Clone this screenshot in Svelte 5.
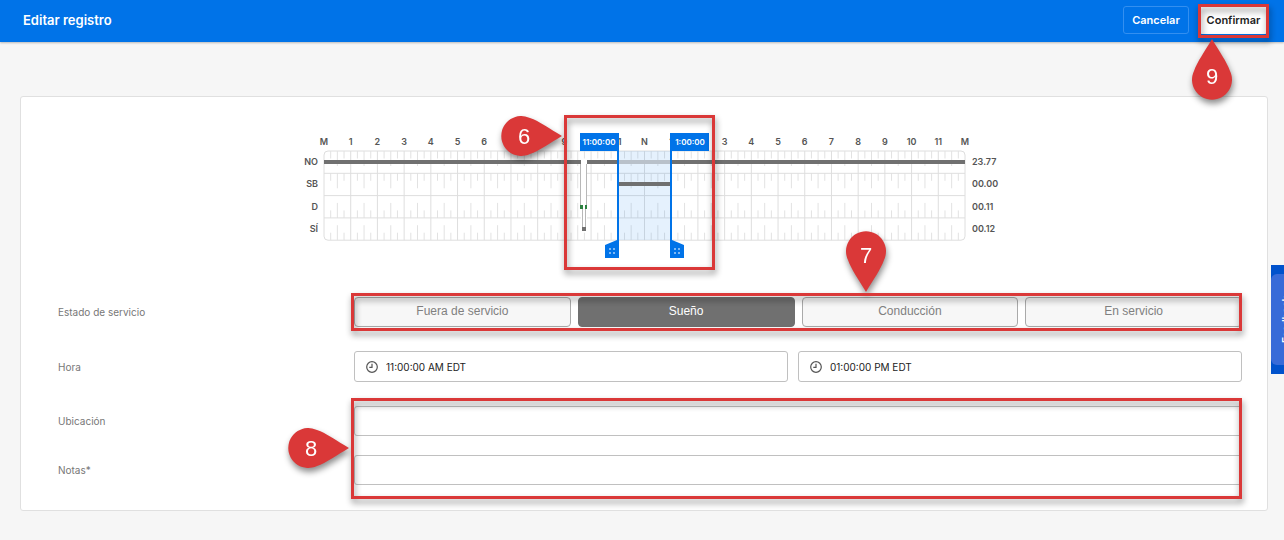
<script>
  let status = 'Sueño';
  let startTime = '11:00:00 AM EDT';
  let endTime = '01:00:00 PM EDT';
  let location = '';
  let notes = '';

  const statuses = ['Fuera de servicio', 'Sueño', 'Conducción', 'En servicio'];

  // grid geometry, in svg units
  const left = 40;
  const right = 681;
  const top = 41;
  const rowHeight = 22.3;
  const hourWidth = (right - left) / 24;

  const hours = Array.from({ length: 25 }, (_, i) => {
    if (i % 24 === 0) return 'M';
    return i === 12 ? 'N' : String(i % 12);
  });

  const rows = [
    { code: 'NO', total: '23.77', ticksUp: false },
    { code: 'SB', total: '00.00', ticksUp: false },
    { code: 'D', total: '00.11', ticksUp: true },
    { code: 'SÍ', total: '00.12', ticksUp: true }
  ];

  // quarter hour marks of one row, the half hour ones are longer
  function ticks(row, index) {
    let d = '';
    for (let q = 1; q < 96; q++) {
      if (q % 4 === 0) continue;
      const x = left + (q * hourWidth) / 4;
      const size = q % 2 === 0 ? 15 : 7.5;
      const y = row.ticksUp ? top + (index + 1) * rowHeight : top + index * rowHeight;
      d += `M${x} ${y}v${row.ticksUp ? -size : size}`;
    }
    return d;
  }
</script>

{#snippet pin(number, side)}
  {#if side === 'right'}
    <svg class="pin pin-right" width="62" height="40" viewBox="0 0 62 40">
      <path d="M62 20C50 13 39 5 30 2A20 20 0 1 0 30 38C39 35 50 27 62 20Z" />
      <text x="24" y="28">{number}</text>
    </svg>
  {:else if side === 'down'}
    <svg class="pin pin-down" width="40" height="62" viewBox="0 0 40 62">
      <path d="M20 62C13 50 5 39 2 30A20 20 0 1 1 38 30C35 39 27 50 20 62Z" />
      <text x="20" y="33">{number}</text>
    </svg>
  {:else}
    <svg class="pin pin-up" width="40" height="62" viewBox="0 0 40 62">
      <path d="M20 0C27 12 35 23 38 32A20 20 0 1 1 2 32C5 23 13 12 20 0Z" />
      <text x="20" y="45">{number}</text>
    </svg>
  {/if}
{/snippet}

{#snippet clock()}
  <svg class="clock" width="12" height="12" viewBox="0 0 12 12" aria-hidden="true">
    <circle cx="6" cy="6" r="5.3" />
    <path d="M6 2.8V6.3H3.3" />
  </svg>
{/snippet}

<header class="topbar">
  <h1>Editar registro</h1>
  <div class="actions">
    <button type="button" class="cancel">Cancelar</button>
    <div class="marked">
      <button type="submit" form="log-form" class="confirm">Confirmar</button>
      <div class="frame frame-confirm">{@render pin(9, 'up')}</div>
    </div>
  </div>
</header>

<main class="card">
  <div class="chart">
    <svg width="720" height="160" viewBox="0 0 720 160">
      <rect class="grid" x={left} y={top} width={right - left} height={rowHeight * 4} rx="4" />
      {#each rows as row, i}
        <path class="tick" d={ticks(row, i)} />
        {#if i > 0}
          <path class="grid" d="M{left} {top + i * rowHeight}H{right}" />
        {/if}
        <text class="label" x="34" y={top + i * rowHeight + 14} text-anchor="end">{row.code}</text>
        <text class="label" x="688" y={top + i * rowHeight + 14}>{row.total}</text>
      {/each}
      {#each hours as hour, i}
        {#if i > 0 && i < 24}
          <path class="grid" d="M{left + i * hourWidth} {top}v{rowHeight * 4}" />
        {/if}
        <text class="label" x={left + i * hourWidth} y="35" text-anchor="middle">{hour}</text>
      {/each}

      <!-- recorded duty line -->
      <rect x="297" y="49" width="6" height="70" fill="#fff" />
      <path class="duty" d="M40 52H297M303 52H681" />
      <path class="drop" d="M296.5 54V96M302.5 54V96M298.5 96V120M301.5 96V120" />
      <path class="driving" d="M296 97H299M301 97H303" />
      <path class="duty" d="M298 119H302" />

      <!-- selected range -->
      <rect x="335" y="41" width="51" height="89" fill="#0073e8" fill-opacity="0.1" />
      <rect x="335" y="50" width="51" height="4" fill="#b9c1ca" />
      <path class="duty" d="M335 74H387" />
      <g class="handle">
        <path d="M296 23H335V148H321V135L333 130V41H296Z" />
        <path d="M425 23H386V148H400V135L388 130V41H425Z" />
      </g>
      <path class="dots" d="M325 139h2M329 139h2M325 143h2M329 143h2M390 139h2M394 139h2M390 143h2M394 143h2" />
      <text class="flag" x="315" y="35">11:00:00</text>
      <text class="flag" x="406" y="35">1:00:00</text>
    </svg>
    <div class="frame frame-range">{@render pin(6, 'right')}</div>
  </div>

  <form id="log-form" on:submit|preventDefault>
    <div class="row">
      <span class="name" id="status-name">Estado de servicio</span>
      <div class="statuses marked" role="group" aria-labelledby="status-name">
        {#each statuses as item}
          <button
            type="button"
            class="status"
            class:active={status === item}
            aria-pressed={status === item}
            on:click={() => (status = item)}
          >{item}</button>
        {/each}
        <div class="frame frame-status">{@render pin(7, 'down')}</div>
      </div>
    </div>

    <div class="row">
      <label class="name" for="start-time">Hora</label>
      <div class="times">
        <div class="time">
          {@render clock()}
          <input id="start-time" type="text" bind:value={startTime} />
        </div>
        <div class="time">
          {@render clock()}
          <input type="text" aria-label="Hora final" bind:value={endTime} />
        </div>
      </div>
    </div>

    <div class="details marked">
      <div class="row">
        <label class="name" for="location">Ubicación</label>
        <input class="field" id="location" type="text" bind:value={location} />
      </div>
      <div class="row">
        <label class="name" for="notes">Notas*</label>
        <input class="field" id="notes" type="text" bind:value={notes} />
      </div>
      <div class="frame frame-details">{@render pin(8, 'right')}</div>
    </div>
  </form>
</main>

<button type="button" class="feedback"><span>Feedback</span></button>

<style>
  :global(body) {
    background: #f6f6f6;
    font-family: Inter, "Liberation Sans", sans-serif;
    color: #333;
  }

  .topbar {
    display: flex;
    align-items: center;
    justify-content: space-between;
    box-sizing: border-box;
    height: 42px;
    padding: 0 16px 2px 23px;
    background: #0073e8;
    box-shadow: 0 1px 2px rgba(0, 0, 0, 0.25);
  }

  h1 {
    margin: 0;
    font-size: 13px;
    font-weight: 600;
    line-height: 16px;
    color: #fff;
  }

  .actions {
    display: flex;
    gap: 10px;
  }

  button,
  input {
    box-sizing: border-box;
    font-family: inherit;
  }

  .cancel,
  .confirm {
    height: 28px;
    padding: 0;
    border: 1px solid #338ff0;
    border-radius: 3px;
    font-size: 11px;
    font-weight: 600;
  }

  .cancel {
    width: 66px;
    background: transparent;
    color: #fff;
  }

  .confirm {
    width: 69px;
    border-color: #fff;
    background: #fff;
    color: #222;
  }

  .card {
    margin: 54px 16px 0 20px;
    padding: 13px 25px 25px 37px;
    border: 1px solid #e0e0e0;
    border-radius: 3px;
    background: #fff;
  }

  .chart {
    position: relative;
    width: 720px;
    margin: 0 auto 27px;
    /* evens out the wider left padding of the card */
    left: -6px;
  }

  .chart > svg {
    display: block;
  }

  .grid {
    fill: none;
    stroke: #dedede;
  }

  .tick {
    stroke: #e2e2e2;
  }

  .label {
    font-size: 9px;
    font-weight: 600;
    fill: #555;
  }

  .duty {
    stroke: #707070;
    stroke-width: 4;
  }

  .drop {
    stroke: #b8b8b8;
  }

  .driving {
    stroke: #2c8040;
    stroke-width: 4;
  }

  .handle {
    fill: #0073e8;
  }

  .dots {
    stroke: #7db8f5;
    stroke-width: 2;
  }

  .flag {
    font-size: 8px;
    font-weight: 600;
    text-anchor: middle;
    fill: #fff;
  }

  form,
  .details {
    display: flex;
    flex-direction: column;
    gap: 24px;
  }

  .details {
    gap: 19px;
  }

  .row {
    display: grid;
    grid-template-columns: 1fr 3fr;
    align-items: center;
  }

  .name {
    font-size: 10px;
    line-height: 16px;
    color: #777;
  }

  .statuses {
    display: grid;
    grid-template-columns: repeat(4, 1fr);
    gap: 7px;
  }

  .status {
    height: 30px;
    padding: 0 0 2px;
    border: 1px solid #aaa;
    border-radius: 4px;
    background: #f7f7f7;
    font-family: "Liberation Sans", Arial, sans-serif;
    font-size: 12px;
    color: #808080;
  }

  .status.active {
    border-color: #707070;
    background: #707070;
    color: #fff;
  }

  .times {
    display: grid;
    grid-template-columns: 43fr 44fr;
    gap: 10px;
  }

  .time {
    display: flex;
    align-items: center;
    gap: 8px;
    box-sizing: border-box;
    height: 31px;
    padding: 0 11px;
    border: 1px solid #c0c0c0;
    border-radius: 3px;
  }

  .time input {
    flex: 1;
    padding: 0;
    border: 0;
    outline: 0;
    background: none;
    font-size: 10px;
    color: #222;
  }

  .clock {
    fill: none;
    stroke: #555;
    stroke-width: 1.2;
  }

  .field {
    width: 100%;
    height: 30px;
    padding: 0 11px;
    border: 1px solid #c0c0c0;
    border-radius: 3px;
    background: #fff;
    font-size: 10px;
  }

  .marked {
    position: relative;
  }

  /* numbered callouts */
  .frame {
    position: absolute;
    box-sizing: border-box;
    border: 3px solid #da3838;
    filter: drop-shadow(1px 4px 3px rgba(0, 0, 0, 0.45));
    pointer-events: none;
  }

  .frame-confirm {
    inset: -2px -1px -4px;
  }

  .frame-range {
    top: 5px;
    left: 280px;
    width: 151px;
    height: 155px;
  }

  .frame-status {
    inset: -4px 0 -4px -3px;
  }

  .frame-details {
    inset: -8px 0 -14px calc(25% - 3px);
  }

  .pin {
    position: absolute;
    overflow: visible;
    fill: #da3838;
  }

  .pin text {
    font-family: "Liberation Sans", Arial, sans-serif;
    font-size: 22px;
    text-anchor: middle;
    fill: #fff;
  }

  .pin-right {
    right: 100%;
    margin-right: 5px;
  }

  .frame-range .pin {
    top: -2px;
  }

  .frame-details .pin {
    top: 27px;
  }

  .pin-down {
    bottom: 100%;
    left: calc(58% - 21px);
    margin-bottom: 4px;
  }

  .pin-up {
    top: 100%;
    left: -9px;
    margin-top: 4px;
  }

  .feedback {
    position: fixed;
    top: 265px;
    right: 0;
    display: flex;
    align-items: center;
    width: 13px;
    height: 109px;
    padding: 0;
    overflow: hidden;
    border: 0;
    background: #0052cc;
  }

  .feedback span {
    flex: none;
    box-sizing: border-box;
    height: 91px;
    padding: 0 8px;
    border-radius: 6px;
    background: #386bd8;
    font-size: 10px;
    font-weight: 600;
    line-height: 14px;
    text-align: center;
    writing-mode: vertical-rl;
    rotate: 180deg;
    color: #fff;
  }
</style>
